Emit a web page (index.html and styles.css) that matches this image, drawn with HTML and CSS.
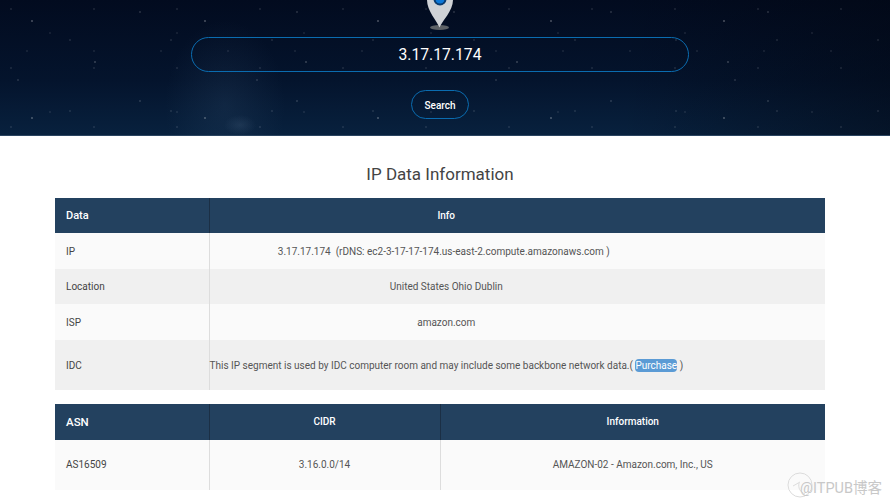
FILE: index.html
```html
<!DOCTYPE html>
<html>
<head>
    <title>IP Data Information</title>
    <link rel="stylesheet" href="styles.css">
</head>
<body>
    <div class="hero">
        <svg class="pin" width="30" height="31" viewBox="0 0 30 31">
            <ellipse cx="14.5" cy="27.5" rx="9.5" ry="2.5" fill="#5c6166"/>
            <path d="M14.5 27.5 C12 21 2 11 2 0 L28 0 C28 11 17 21 14.5 27.5 Z" fill="#cfd2d6"/>
            <circle cx="15" cy="-1" r="6.5" fill="#0b3c70"/>
            <circle cx="15" cy="-1" r="4.5" fill="#0d78d8"/>
        </svg>
        <input class="ip-input" type="text" value="3.17.17.174">
        <button class="search-btn">Search</button>
    </div>

    <div class="content">
        <h2>IP Data Information</h2>
        <table class="data-table info-table">
            <colgroup>
                <col class="col-a">
                <col class="col-b">
                <col>
            </colgroup>
            <thead>
                <tr><th class="left">Data</th><th>Info</th><th class="blank"></th></tr>
            </thead>
            <tbody>
                <tr><td class="left">IP</td><td>3.17.17.174 &nbsp;(rDNS: ec2-3-17-17-174.us-east-2.compute.amazonaws.com )&nbsp;&nbsp;</td><td class="blank"></td></tr>
                <tr><td class="left">Location</td><td>United States Ohio Dublin</td><td class="blank"></td></tr>
                <tr><td class="left">ISP</td><td>amazon.com</td><td class="blank"></td></tr>
                <tr class="tall"><td class="left">IDC</td><td>This IP segment is used by IDC computer room and may include some backbone network data.( <a class="buy" href="#">Purchase</a> )</td><td class="blank"></td></tr>
            </tbody>
        </table>

        <table class="data-table asn-table">
            <colgroup>
                <col class="col-a">
                <col class="col-c">
                <col>
            </colgroup>
            <thead>
                <tr><th class="left big">ASN</th><th>CIDR</th><th>Information</th></tr>
            </thead>
            <tbody>
                <tr class="tall"><td class="left">AS16509</td><td>3.16.0.0/14</td><td>AMAZON-02 - Amazon.com, Inc., US</td></tr>
            </tbody>
        </table>
    </div>

    <div class="watermark">
        <svg class="mark-circle" width="26" height="26" viewBox="0 0 26 26">
            <circle cx="13" cy="13" r="12" fill="none" stroke="#dcdcdc"/>
            <path d="M6 14 L13 10 M12 11 C11 16 13 20 18 22" fill="none" stroke="#dcdcdc"/>
        </svg>
        <span class="mark-text">@ITPUB博客</span>
    </div>
</body>
</html>
```

FILE: styles.css
```css
html, body {
    margin: 0;
    padding: 0;
}

body {
    background-color: #fff;
    font-family: Roboto, "Noto Sans CJK SC", sans-serif;
    color: #444;
    position: relative;
    height: 504px;
    overflow: hidden;
}

.hero {
    height: 136px;
    box-sizing: border-box;
    padding-right: 10px;
    border-bottom: 1px solid #2a4460;
    display: flex;
    flex-direction: column;
    align-items: center;
    background-color: #04122b;
    background-image:
        radial-gradient(circle at 32px 21px, rgba(255,255,255,0.32) 0.5px, transparent 1.1px),
        radial-gradient(circle at 95px 62px, rgba(255,255,255,0.24) 0.5px, transparent 1.1px),
        radial-gradient(circle at 140px 12px, rgba(255,255,255,0.2) 0.5px, transparent 1px),
        radial-gradient(circle at 18px 80px, rgba(255,255,255,0.18) 0.5px, transparent 1px),
        radial-gradient(circle at 70px 40px, rgba(255,255,255,0.15) 0.5px, transparent 1px),
        radial-gradient(circle at 11px 9px, rgba(255,255,255,0.14) 0.5px, transparent 1px),
        radial-gradient(circle at 50px 33px, rgba(255,255,255,0.12) 0.5px, transparent 1px),
        radial-gradient(circle at 27px 51px, rgba(255,255,255,0.12) 0.5px, transparent 1px),
        radial-gradient(ellipse 16px 10px at 240px 125px, rgba(120,150,180,0.14), transparent),
        radial-gradient(ellipse 60px 85px at 225px 105px, rgba(70,105,140,0.16), transparent),
        linear-gradient(90deg, transparent 70%, rgba(2,6,16,0.45) 100%),
        linear-gradient(180deg, #020b1f 0%, #04142d 60%, #08213e 100%);
    background-size: 173px 97px, 211px 113px, 157px 89px, 239px 127px, 101px 71px, 83px 59px, 127px 79px, 67px 103px, auto, auto, auto, auto;
}

.pin {
    display: block;
    flex: none;
    margin-bottom: 6px;
}

.ip-input {
    width: 498px;
    height: 35px;
    box-sizing: border-box;
    border: 1px solid #0a6cb0;
    border-radius: 18px;
    background: transparent;
    color: #fff;
    font-family: inherit;
    font-size: 15.7px;
    text-align: center;
    padding: 0;
    outline: none;
}

.search-btn {
    margin-top: 18px;
    width: 58px;
    height: 29px;
    border: 1px solid #0a6cb0;
    border-radius: 15px;
    background: transparent;
    color: #fff;
    font-family: inherit;
    font-size: 10px;
    font-weight: 500;
    padding: 1px 0 0;
}

.content {
    padding: 0 65px 0 55px;
}

h2 {
    margin: 0;
    height: 62px;
    line-height: 77px;
    font-size: 17px;
    font-weight: 400;
    text-align: center;
    color: #444;
}

.data-table {
    width: 770px;
    border-collapse: collapse;
    table-layout: fixed;
    font-size: 10px;
}

.col-a { width: 154px; }
.col-b { width: 474px; }
.col-c { width: 231px; }

.data-table th {
    height: 35px;
    padding: 0;
    background-color: #23415f;
    color: #fff;
    font-weight: 500;
    font-size: 10px;
    border-left: 1px solid #1b2f45;
}

.data-table td {
    height: 35.5px;
    box-sizing: border-box;
    padding: 1px 0 0;
    text-align: center;
    color: #555;
    white-space: nowrap;
    border-left: 1px solid #ddd;
}

.data-table th.left, .data-table td.left {
    text-align: left;
    padding-left: 11px;
    border-left: none;
    color: #444;
}

.data-table th.left {
    color: #fff;
    font-size: 11px;
}

.data-table th.big {
    font-size: 11.5px;
}

.data-table th.blank, .data-table td.blank {
    border-left: none;
}

.data-table tbody tr:nth-child(odd) {
    background-color: #fafafa;
}

.data-table tbody tr:nth-child(even) {
    background-color: #f0f0f0;
}

.data-table tr.tall td {
    height: 50px;
}

.buy {
    background-color: #5b9bd5;
    color: #fff;
    text-decoration: none;
    border-radius: 4px;
    padding: 1px 0;
}

.asn-table {
    margin-top: 14px;
}

.asn-table th {
    height: 36px;
}

.data-table.asn-table td {
    padding-top: 0;
}

.watermark {
    position: absolute;
    left: 787px;
    top: 472px;
    display: flex;
    color: #c8c8c8;
}

.mark-circle {
    flex: none;
    margin-right: -13px;
}

.mark-text {
    font-size: 14.5px;
    line-height: 16px;
    margin-top: 9px;
    white-space: nowrap;
}
```
